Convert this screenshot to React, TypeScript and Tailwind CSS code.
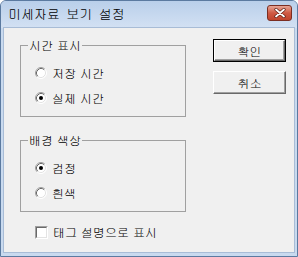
import React from "react";

const font = "font-['Gulim','Noto_Sans_CJK_KR',sans-serif]";

function Radio({ checked }: { checked?: boolean }) {
  return (
    <svg width="12" height="12" viewBox="0 0 12 12" className="shrink-0">
      <circle cx="6" cy="6" r="5" fill="#ffffff" />
      <path d="M2.11 9.89 A5.5 5.5 0 0 1 9.89 2.11" fill="none" stroke="#a0a0a0" strokeWidth="1" />
      <path d="M9.89 2.11 A5.5 5.5 0 0 1 2.11 9.89" fill="none" stroke="#ffffff" strokeWidth="1" />
      <path d="M2.82 9.18 A4.5 4.5 0 0 1 9.18 2.82" fill="none" stroke="#696969" strokeWidth="1" />
      <path d="M9.18 2.82 A4.5 4.5 0 0 1 2.82 9.18" fill="none" stroke="#e3e3e3" strokeWidth="1" />
      {checked && <circle cx="6" cy="6" r="2" fill="#000000" />}
    </svg>
  );
}

function Checkbox() {
  return (
    <span className="block w-[13px] h-[13px] shrink-0 border border-t-[#a0a0a0] border-l-[#a0a0a0] border-r-white border-b-white">
      <span className="block w-full h-full bg-white border border-t-[#696969] border-l-[#696969] border-r-[#e3e3e3] border-b-[#e3e3e3]" />
    </span>
  );
}

function Button({ label, primary }: { label: string; primary?: boolean }) {
  return (
    <div className={`w-[73px] h-[23px] ${primary ? "border border-black" : ""}`}>
      <div className="w-full h-full flex items-center justify-center bg-[#f0f0f0] border border-t-white border-l-white border-r-[#696969] border-b-[#696969] shadow-[inset_-1px_-1px_0_#a0a0a0] text-[12px] leading-[14px] text-black">
        {label}
      </div>
    </div>
  );
}

function Group({
  title,
  options,
  className = "",
}: {
  title: string;
  options: { label: string; checked?: boolean }[];
  className?: string;
}) {
  return (
    <fieldset className={`w-[166px] border border-[#a0a0a0] pl-[7px] pb-[11px] ${className}`}>
      <legend className="px-[1px] text-[12px] leading-[14px] text-black">{title}</legend>
      <div className="pl-[7px] pt-[14px] flex flex-col gap-[11px]">
        {options.map((o) => (
          <div key={o.label} className="h-[14px] flex items-center gap-[5px] text-[12px] leading-[14px] text-black">
            <Radio checked={o.checked} />
            <span>{o.label}</span>
          </div>
        ))}
      </div>
    </fieldset>
  );
}

export default function App() {
  return (
    <div className={`w-[298px] h-[257px] flex flex-col rounded-t-[6px] border border-[#5b7aa0] bg-[#c9daef] overflow-hidden ${font}`}>
      {/* Title bar */}
      <div className="h-[27px] flex items-start pl-[7px] pr-[5px] bg-gradient-to-b from-[#b9cfea] to-[#d3e1f3]">
        <span className="mt-[5px] text-[13px] leading-[16px] text-black [word-spacing:2px]">미세자료 보기 설정</span>
        <div className="ml-auto mt-[4px] w-[25px] h-[16px] rounded-[3px] border border-[#7b2e22] bg-gradient-to-b from-[#e6a596] via-[#cf5a44] to-[#c0442c] flex items-center justify-center">
          <svg width="12" height="10" viewBox="0 0 12 10">
            <path d="M2 1.5 L10 8.5 M10 1.5 L2 8.5" stroke="#5a1c12" strokeWidth="3.2" strokeLinecap="round" />
            <path d="M2 1.5 L10 8.5 M10 1.5 L2 8.5" stroke="#ffffff" strokeWidth="1.8" strokeLinecap="round" />
          </svg>
        </div>
      </div>

      {/* Client area */}
      <div className="flex-1 mx-[3px] mb-[4px] bg-[#f0f0f0] shadow-[0_0_0_1px_#a8bcd6] flex pl-[16px] pt-[10px] pr-[8px]">
        <div className="flex flex-col">
          <Group
            title="시간 표시"
            options={[{ label: "저장 시간" }, { label: "실제 시간", checked: true }]}
          />
          <Group
            title="배경 색상"
            className="mt-[16px]"
            options={[{ label: "검정", checked: true }, { label: "흰색" }]}
          />
          <div className="mt-[13px] ml-[15px] h-[14px] flex items-center gap-[5px] text-[12px] leading-[14px] text-black">
            <Checkbox />
            <span>태그 설명으로 표시</span>
          </div>
        </div>
        <div className="ml-auto mt-[1px] flex flex-col gap-[9px]">
          <Button label="확인" primary />
          <Button label="취소" />
        </div>
      </div>
    </div>
  );
}
